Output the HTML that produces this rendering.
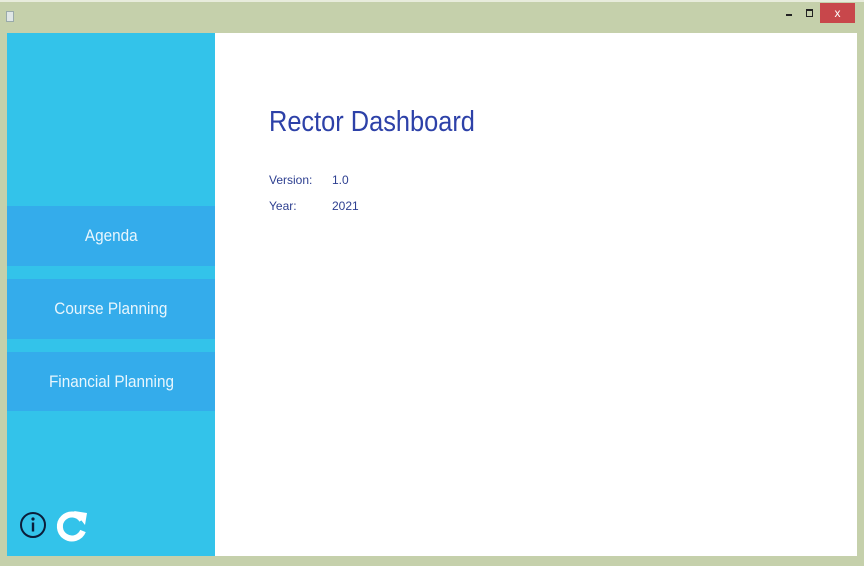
<!DOCTYPE html>
<html><head><meta charset="utf-8"><style>
*{margin:0;padding:0;box-sizing:border-box}
body{width:864px;height:566px;background:#c5d0ab;position:relative;overflow:hidden;font-family:"Liberation Sans",sans-serif}
.top{position:absolute;left:0;top:0;width:864px;height:2px;background:#e8ecdc}
.ico{position:absolute;left:6px;top:11px;width:8px;height:11px;background:#dfe6e6;border:1px solid #9aa}
.min{position:absolute;left:786px;top:14px;width:6px;height:2px;background:#222}
.max{position:absolute;left:806px;top:9px;width:7px;height:8px;border:1px solid #222;border-top-width:2px}
.close{position:absolute;left:820px;top:3px;width:35px;height:20px;background:#c8474b;color:#fff;font-size:12px;text-align:center;line-height:20px}
.side{position:absolute;left:7px;top:33px;width:208px;height:523px;background:#33c3ea}
.main{position:absolute;left:215px;top:33px;width:642px;height:523px;background:#fff}
.btn{position:absolute;left:0;width:208px;height:60px;background:#34aceb;color:#e8f6fd;font-size:17px;text-align:center;line-height:60px}
.btn span{display:inline-block;transform:scaleX(0.9)}
h1{position:absolute;left:54px;top:73px;font-weight:normal;font-size:29px;color:#2d41a8;transform:scaleX(0.875);transform-origin:left}
.t{position:absolute;font-size:12px;color:#2d3f90}
</style></head><body>
<div class="top"></div>
<div class="ico"></div>
<div class="min"></div><div class="max"></div>
<div class="close">x</div>
<div class="side">
<div class="btn" style="top:173px"><span>Agenda</span></div>
<div class="btn" style="top:246px"><span>Course Planning</span></div>
<div class="btn" style="top:319px;height:59px"><span>Financial Planning</span></div>
<svg style="position:absolute;left:12px;top:476px" width="70" height="34" viewBox="0 0 70 34">
<circle cx="14" cy="16" r="12" fill="none" stroke="#0b1d3a" stroke-width="2"/>
<circle cx="14" cy="10" r="1.6" fill="#0b1d3a"/>
<rect x="12.8" y="13.5" width="2.4" height="9" fill="#0b1d3a"/>
<path d="M63 11 A12 12 0 1 0 64 22" fill="none" stroke="#fff" stroke-width="6"/>
<path d="M55 2 L68 4 L66 16 Z" fill="#fff"/>
</svg>
</div>
<div class="main">
<h1>Rector Dashboard</h1>
<div class="t" style="left:54px;top:140px">Version:</div>
<div class="t" style="left:117px;top:140px">1.0</div>
<div class="t" style="left:54px;top:166px">Year:</div>
<div class="t" style="left:117px;top:166px">2021</div>
</div>
</body></html>
